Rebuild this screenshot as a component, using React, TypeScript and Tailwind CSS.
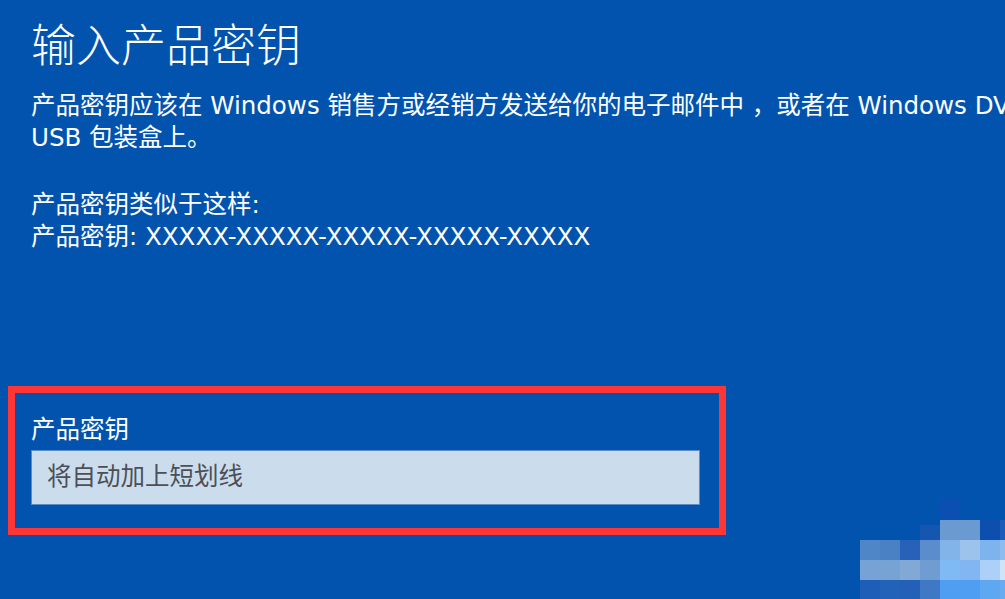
import React from 'react';

// Latin glyphs in the shot are wide (YaHei-like); DejaVu Sans has close widths, CJK falls through to Noto
const font = { fontFamily: '"DejaVu Sans", "Noto Sans CJK SC", sans-serif' };
const titleFont = { fontFamily: '"Noto Sans CJK SC", sans-serif' };

// pixelated blur patch in the bottom-right corner
const mosaic: { x: number; y: number; c: string }[] = [
  { x: 940, y: 500, c: '#0a4fb1' },
  { x: 920, y: 525, c: '#1556b0' },
  { x: 940, y: 520, c: '#6a9acf' },
  { x: 960, y: 520, c: '#6a9acf' },
  { x: 980, y: 520, c: '#0d4fae' },
  { x: 1000, y: 520, c: '#1a5cb8' },
  { x: 860, y: 540, c: '#4f86c8' },
  { x: 880, y: 540, c: '#4a80c4' },
  { x: 900, y: 540, c: '#2762b8' },
  { x: 920, y: 540, c: '#5b8ccb' },
  { x: 940, y: 540, c: '#82b4ea' },
  { x: 960, y: 540, c: '#9bc3ec' },
  { x: 980, y: 540, c: '#7db4ee' },
  { x: 1000, y: 540, c: '#8fbcec' },
  { x: 860, y: 560, c: '#76a2d6' },
  { x: 880, y: 560, c: '#77a2d4' },
  { x: 900, y: 560, c: '#82a8d6' },
  { x: 920, y: 560, c: '#6f9dd2' },
  { x: 940, y: 560, c: '#7fbaf4' },
  { x: 960, y: 560, c: '#82b6f2' },
  { x: 980, y: 560, c: '#acd0f8' },
  { x: 1000, y: 560, c: '#d0e4f8' },
  { x: 860, y: 580, c: '#1e5eb8' },
  { x: 880, y: 580, c: '#2262b8' },
  { x: 900, y: 580, c: '#2360b8' },
  { x: 920, y: 580, c: '#3f78c4' },
  { x: 940, y: 580, c: '#4e9ff4' },
  { x: 960, y: 580, c: '#4e9ff4' },
  { x: 980, y: 580, c: '#5ea8f2' },
  { x: 1000, y: 580, c: '#6aaaee' },
];

export default function App() {
  return (
    <div className="relative w-full h-[599px] overflow-hidden bg-[#0153ae] text-white" style={font}>
      <div className="pl-[31px] pt-[14px]">
        <h1 className="text-[45px] font-light leading-[58px] whitespace-nowrap" style={titleFont}>
          输入产品密钥
        </h1>
        <div className="mt-[18px] text-[24.5px] leading-[32px] whitespace-nowrap">
          <p>产品密钥应该在 Windows 销售方或经销方发送给你的电子邮件中 ，或者在 Windows DVD 或</p>
          <p>USB 包装盒上。</p>
        </div>
        <div className="mt-[35px] text-[24.5px] leading-[32px] whitespace-nowrap">
          <p>产品密钥类似于这样:</p>
          <p>产品密钥: XXXXX-XXXXX-XXXXX-XXXXX-XXXXX</p>
        </div>
      </div>

      <div className="mt-[133px] ml-[8px] w-[718px] h-[149px] border-[7px] border-[#fe3636] pl-[16px] pt-[21px]">
        <div className="text-[24.5px] leading-[32px]">产品密钥</div>
        <div className="mt-[4px] w-[669px] h-[55px] bg-[#cbdded] border border-[#5a8cc8] flex items-center pl-[15px]">
          <span className="text-[24.5px] text-[#4c5056]">将自动加上短划线</span>
        </div>
      </div>

      {mosaic.map((m, i) => (
        <div
          key={i}
          className="absolute w-[20px] h-[20px]"
          style={{ left: m.x, top: m.y, backgroundColor: m.c }}
        />
      ))}
    </div>
  );
}
